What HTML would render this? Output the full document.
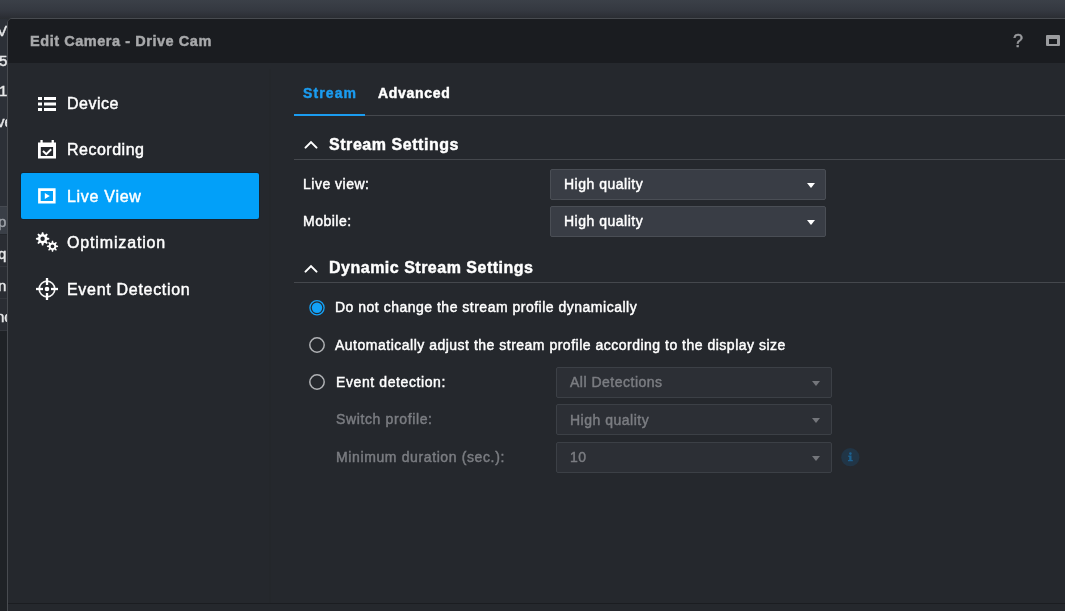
<!DOCTYPE html>
<html><head><meta charset="utf-8">
<style>
html,body{margin:0;padding:0;}
body{width:1065px;height:611px;overflow:hidden;position:relative;background:#2b2e34;font-family:"Liberation Sans",sans-serif;}
.t{position:absolute;white-space:nowrap;line-height:1;will-change:transform;-webkit-text-stroke:0.45px currentColor;}
.bgtop{position:absolute;left:0;top:0;width:1065px;height:19px;background:linear-gradient(#3b4048 0px,#343840 11px,#2c2f35 17px,#2a2d32 19px);}
.bgleft{position:absolute;left:0;top:19px;width:7px;height:592px;background:#2e3238;overflow:hidden;}
.dlg{position:absolute;left:7px;top:18px;width:1100px;height:640px;border:1px solid #484b50;border-radius:5px 0 0 0;background:#25282d;overflow:hidden;}
.title{position:absolute;left:0;top:0;width:100%;height:44px;background:#1a1c20;}
.side-sep{position:absolute;left:261px;top:50px;width:2px;height:535px;background:#24272b;}
.bottom-line{position:absolute;left:0;top:584px;width:100%;height:1px;background:#1b1d21;}
.side{color:#fff;font-size:16px;letter-spacing:0.5px;}
.active{position:absolute;left:21px;top:173px;width:238px;height:46px;background:#02a0f9;border-radius:2px;box-shadow:0 0 0 1px rgba(5,30,50,0.45);}
.tab{font-size:14px;font-weight:bold;letter-spacing:0.7px;}
.hline{position:absolute;left:294px;width:771px;height:1px;background:#45484d;}
.sec{color:#fff;font-size:16px;font-weight:bold;letter-spacing:0.5px;}
.lbl{color:#fff;font-size:14px;letter-spacing:0.5px;}
.dis{color:#7b7d82;}
.dd{position:absolute;width:274px;height:29px;border:1px solid #4a4e55;border-radius:2px;background:#393d45;}
.dd.d{background:#2c2f35;border-color:#3c4046;}
.caret{position:absolute;width:0;height:0;border-left:4.5px solid transparent;border-right:4.5px solid transparent;border-top:5px solid #fff;}
.caret.g{border-top-color:#74767b;}
.radio{position:absolute;width:13px;height:13px;border:1.5px solid #b8babd;border-radius:50%;}
</style></head><body>
<div class="bgtop"></div>
<div class="bgleft">
  <div style="position:absolute;left:0;top:0;width:8px;height:187px;background:#2c3037;"></div>
  <div style="position:absolute;left:0;top:187px;width:8px;height:1px;background:#464a51;"></div>
  <div style="position:absolute;left:0;top:188px;width:8px;height:27px;background:#3a3f47;"></div>
  <div style="position:absolute;left:0;top:215px;width:8px;height:97px;background:#2a2d33;"></div>
  <div style="position:absolute;left:0;top:215px;width:8px;height:1px;background:#24272c;"></div>
  <div style="position:absolute;left:0;top:247px;width:8px;height:1px;background:#34373d;"></div>
  <div style="position:absolute;left:0;top:279px;width:8px;height:1px;background:#34373d;"></div>
  <div style="position:absolute;left:0;top:311px;width:8px;height:1px;background:#34373d;"></div>
  <div style="position:absolute;left:0;top:312px;width:8px;height:280px;background:#1f2226;"></div>
  <div class="t" style="left:-3px;top:4px;font-size:15px;color:#e8e9ea;">V</div>
  <div class="t" style="left:-1px;top:34px;font-size:15px;color:#e8e9ea;">5c</div>
  <div class="t" style="left:-1px;top:64px;font-size:15px;color:#e8e9ea;">1</div>
  <div class="t" style="left:-3px;top:95px;font-size:15px;color:#e8e9ea;">ve</div>
  <div class="t" style="left:-2px;top:195px;font-size:15px;color:#a0a4aa;">p</div>
  <div class="t" style="left:-2px;top:227px;font-size:15px;color:#e8e9ea;">qu</div>
  <div class="t" style="left:-2px;top:259px;font-size:15px;color:#e8e9ea;">n</div>
  <div class="t" style="left:-4px;top:290px;font-size:15px;color:#e8e9ea;">nc</div>
</div>

<div class="dlg">
  <div class="title"></div>
  <div class="side-sep"></div>
  <div class="bottom-line"></div>
</div>

<!-- title text -->
<div class="t" style="left:30px;top:34px;font-size:14.5px;font-weight:bold;color:#a8a9ab;letter-spacing:0.55px;">Edit Camera - Drive Cam</div>
<div class="t" style="left:1013px;top:32px;font-size:18px;color:#9b9c9f;">?</div>
<div style="position:absolute;left:1046px;top:35px;width:8px;height:5px;border:solid #9b9c9f;border-width:4px 3px 2px 3px;border-radius:1px;"></div>

<!-- sidebar -->
<div class="active"></div>
<div class="t side" style="left:67px;top:95.5px;">Device</div>
<div class="t side" style="left:67px;top:141.5px;">Recording</div>
<div class="t side" style="left:67px;top:189px;letter-spacing:0.7px;">Live View</div>
<div class="t side" style="left:67px;top:235.3px;letter-spacing:0.85px;">Optimization</div>
<div class="t side" style="left:67px;top:282.3px;letter-spacing:0.7px;">Event Detection</div>

<!-- tabs -->
<div class="t tab" style="left:303px;top:86px;color:#1b9cf0;letter-spacing:1.1px;">Stream</div>
<div class="t tab" style="left:378px;top:86px;color:#fff;">Advanced</div>
<div class="hline" style="top:115px;"></div>
<div style="position:absolute;left:294px;top:114px;width:71px;height:2px;background:#1b9cf0;"></div>

<!-- section 1 -->
<div class="t sec" style="left:329px;top:137px;letter-spacing:0.55px;">Stream Settings</div>
<div class="hline" style="top:159px;"></div>
<div class="t lbl" style="left:303px;top:177px;">Live view:</div>
<div class="t lbl" style="left:303px;top:214px;">Mobile:</div>
<div class="dd" style="left:550px;top:169px;"></div>
<div class="dd" style="left:550px;top:206px;"></div>
<div class="t lbl" style="left:564px;top:177px;">High quality</div>
<div class="t lbl" style="left:564px;top:214px;">High quality</div>
<div class="caret" style="left:807px;top:183px;"></div>
<div class="caret" style="left:807px;top:220px;"></div>

<!-- section 2 -->
<div class="t sec" style="left:329px;top:260px;">Dynamic Stream Settings</div>
<div class="hline" style="top:282px;"></div>
<div class="t lbl" style="left:335px;top:300px;">Do not change the stream profile dynamically</div>
<div class="t lbl" style="left:335px;top:338px;">Automatically adjust the stream profile according to the display size</div>
<div class="t lbl" style="left:336px;top:375px;letter-spacing:0.6px;">Event detection:</div>
<div class="t lbl dis" style="left:336px;top:412px;letter-spacing:0.63px;">Switch profile:</div>
<div class="t lbl dis" style="left:336px;top:450px;letter-spacing:0.62px;">Minimum duration (sec.):</div>
<div class="dd d" style="left:556px;top:367px;"></div>
<div class="dd d" style="left:556px;top:404px;"></div>
<div class="dd d" style="left:556px;top:442px;"></div>
<div class="t lbl dis" style="left:570px;top:375px;">All Detections</div>
<div class="t lbl dis" style="left:570px;top:413px;">High quality</div>
<div class="t lbl dis" style="left:570px;top:450px;">10</div>
<div class="caret g" style="left:812px;top:381px;"></div>
<div class="caret g" style="left:812px;top:418px;"></div>
<div class="caret g" style="left:812px;top:456px;"></div>

<svg style="position:absolute;left:0;top:0;" width="1065" height="611">
 <g fill="#fff">
  <rect x="38" y="97" width="4" height="3"/><rect x="44" y="97" width="12" height="3"/>
  <rect x="38" y="102.5" width="4" height="3"/><rect x="44" y="102.5" width="12" height="3"/>
  <rect x="38" y="108" width="4" height="3"/><rect x="44" y="108" width="12" height="3"/>
 </g>
 <g>
  <path fill="#fff" fill-rule="evenodd" d="M38 142.4H56V158.6H38Z M40.8 146.9V156H53.1V146.9Z"/>
  <rect fill="#fff" x="40.4" y="140" width="2.3" height="3"/><rect fill="#fff" x="51.6" y="140" width="2.3" height="3"/>
  <path d="M43 151L46.3 154.2L51.2 149.3" stroke="#fff" stroke-width="2" fill="none"/>
 </g>
 <g>
  <path fill="#fff" fill-rule="evenodd" d="M38.1 188.3H55.6V203.4H38.1Z M40.7 190.9V201H53V190.9Z"/>
  <path fill="#fff" d="M44.8 193L49.8 196L44.8 199Z"/>
 </g>
 <path fill="#fff" fill-rule="evenodd" d="M41.41 234.36L41.90 232.14L43.30 232.14L43.79 234.36L44.90 234.82L46.82 233.59L47.81 234.58L46.58 236.50L47.04 237.61L49.26 238.10L49.26 239.50L47.04 239.99L46.58 241.10L47.81 243.02L46.82 244.01L44.90 242.78L43.79 243.24L43.30 245.46L41.90 245.46L41.41 243.24L40.30 242.78L38.38 244.01L37.39 243.02L38.62 241.10L38.16 239.99L35.94 239.50L35.94 238.10L38.16 237.61L38.62 236.50L37.39 234.58L38.38 233.59L40.30 234.82ZM40.40 238.80a2.2 2.2 0 1 0 4.4 0a2.2 2.2 0 1 0 -4.4 0ZM51.52 242.63L51.91 240.73L53.09 240.73L53.48 242.63L54.40 243.01L56.02 241.95L56.85 242.78L55.79 244.40L56.17 245.32L58.07 245.71L58.07 246.89L56.17 247.28L55.79 248.20L56.85 249.82L56.02 250.65L54.40 249.59L53.48 249.97L53.09 251.87L51.91 251.87L51.52 249.97L50.60 249.59L48.98 250.65L48.15 249.82L49.21 248.20L48.83 247.28L46.93 246.89L46.93 245.71L48.83 245.32L49.21 244.40L48.15 242.78L48.98 241.95L50.60 243.01ZM50.60 246.30a1.9 1.9 0 1 0 3.8 0a1.9 1.9 0 1 0 -3.8 0Z"/>
 <g>
  <circle cx="47" cy="289" r="7.8" stroke="#f4f4f4" stroke-width="1.7" fill="none"/>
  <circle cx="47" cy="289" r="2.3" fill="#fff"/>
  <rect x="36" y="287.85" width="7" height="2.3" fill="#fff"/><rect x="51" y="287.85" width="7" height="2.3" fill="#fff"/>
  <rect x="45.85" y="278" width="2.3" height="7" fill="#fff"/><rect x="45.85" y="293" width="2.3" height="7" fill="#fff"/>
 </g>
 <g stroke="#fff" stroke-width="2.05" fill="none" stroke-linecap="round" stroke-linejoin="miter">
  <path d="M305.5 147.6L311 142.1L316.5 147.6"/>
  <path d="M305.5 271.6L311 266.1L316.5 271.6"/>
 </g>
 <g>
  <circle cx="317" cy="307.8" r="7.1" stroke="#15a1f5" stroke-width="1.3" fill="none"/>
  <circle cx="317" cy="307.8" r="5.2" fill="#12a2f8"/>
  <circle cx="317" cy="345" r="7.2" stroke="#b0b2b5" stroke-width="1.5" fill="none"/>
  <circle cx="317" cy="382" r="7.2" stroke="#b0b2b5" stroke-width="1.5" fill="none"/>
 </g>
 <g>
  <circle cx="850.3" cy="457.2" r="9.1" fill="#213546"/>
  <circle cx="850.4" cy="453.6" r="1.3" fill="#1c6190"/>
  <path fill="#1c6190" d="M848.3 455.6H851.5V460H852.8V461.3H848V460H849.2V456.9H848.3Z"/>
 </g>
</svg>
</body></html>
